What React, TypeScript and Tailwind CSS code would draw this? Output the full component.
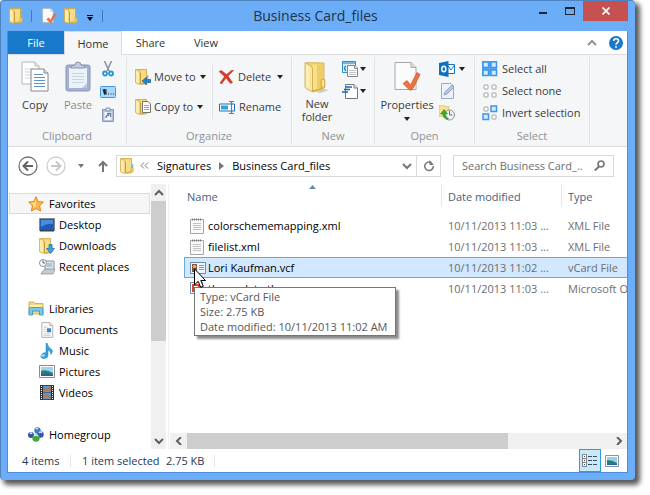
import type { ReactNode } from 'react';

function LargeFolder() {
  return (
    <svg viewBox="0 0 26 32" className="h-8 w-[26px]" aria-hidden="true">
      <path d="M20 28l5 1-9 3-4-1z" fill="#c9c9c9" />
      <path d="M3 1.500l17 .5v25l-11 3z" fill="#f3d46f" stroke="#d3ab45" strokeWidth=".8" />
      <path d="M8 4l11-1v23l-11 3z" fill="#f8e08a" />
      <path d="M13 4l6-1v23l-6 1.500z" fill="#efcd64" />
      <path d="M1 1.500l6 3.500q1.500 1 1.500 3V31L2 27.500q-1-.5-1-2z" fill="#f9e59c" stroke="#cfa63d" strokeWidth=".8" />
      <path d="M2.500 4l2 1.500V27l-2-1.500z" fill="#fdf3c6" />
      <path d="M9 30l8-2.500V20q0-2 2-2t2 2v6l-2 2-10 3z" fill="#e9bd4b" stroke="#cb9f36" strokeWidth=".6" />
      <path d="M18 19.500q1-1.500 2 0v5.500l-2 .5z" fill="#fbea9e" />
    </svg>
  );
}

function Folder() {
  return (
    <svg viewBox="0 0 14 16" className="h-4 w-3.5" aria-hidden="true">
      <path d="M1.500.5h10v13l-5 1.500z" fill="#efcf69" stroke="#d0a63c" strokeWidth=".8" />
      <path d="M6 1.500h5v11.500l-5 1z" fill="#f5dc86" />
      <path d="M.5.5l3 1.500q1.500.8 1.500 2v11.500L1 14q-.5-.2-.5-1z" fill="#fbebad" stroke="#d3aa40" strokeWidth=".8" />
      <path d="M5.500 15.300V4" stroke="#c99d31" />
      <path d="M11 9.500h1.500q.8 0 .8 1v3l-2 1.500-5 .5 4.700-2z" fill="#f2ca5a" stroke="#cc9f35" strokeWidth=".5" />
      <path d="M12.700 6v4" stroke="#6fb9df" strokeWidth="1.200" />
    </svg>
  );
}

function Page({ className = 'w-4 h-4', children }: { className?: string; children?: ReactNode }) {
  return (
    <svg viewBox="0 0 24 28" className={className} aria-hidden="true">
      <path d="M3 1h14l5 5v21H3z" fill="#fcfcfc" stroke="#9b9b9b" strokeWidth="1.300" />
      <path d="M17 1v5h5" fill="#e5e5e5" stroke="#9b9b9b" strokeWidth="1.300" />
      {children}
    </svg>
  );
}

function CheckedPage({ className }: { className?: string }) {
  return (
    <svg viewBox="0 0 27 31" className={className} aria-hidden="true">
      <path d="M1 1h16l5 5v22H1z" fill="#fbfbfc" stroke="#a7a7ab" />
      <path d="M17 1v5h5" fill="#ddd" stroke="#a7a7ab" />
      <path d="M9 22l4-3 3.500 4.500L23 11l3 2-7 14q-2 3-4 1z" fill="#ee7344" stroke="#ce5125" strokeWidth=".7" />
    </svg>
  );
}

function Down({ className = 'text-[#222]' }: { className?: string }) {
  return (
    <svg viewBox="0 0 6 4" className={`h-1 w-1.5 shrink-0 ${className}`} aria-hidden="true">
      <path d="M0 0h6L3 4z" fill="currentColor" />
    </svg>
  );
}

function CopyIcon() {
  return (
    <svg viewBox="0 0 28 32" className="h-8 w-7" aria-hidden="true">
      <path d="M1 1h13l4 4v18H1z" fill="#fff" stroke="#b6b6b6" />
      <path d="M14 1v4h4" fill="#eee" stroke="#b6b6b6" />
      <path d="M4 8h8M4 11h7M4 14h7M4 17h7" stroke="#c6d5e6" />
      <path d="M10 8h13l4 4v18H10z" fill="#fff" stroke="#868686" />
      <path d="M23 8v4h4" fill="#e4e4e4" stroke="#868686" />
      <path d="M13 13.500h9M13 16.500h11M13 19.500h11M13 22.500h11M13 25.500h11" stroke="#5994cd" />
    </svg>
  );
}

function PasteIcon() {
  return (
    <svg viewBox="0 0 26 32" className="h-8 w-[26px]" aria-hidden="true">
      <rect x="1" y="4" width="24" height="26" rx="2" fill="#a3b2cf" stroke="#8799ba" />
      <path d="M4 7h18v20H4z" fill="#edf2fa" />
      <path d="M7 12.500h12M7 15.500h12M7 18.500h12M7 21.500h12" stroke="#c8d3e4" />
      <path d="M6 7V5l4-1q0-3 3-3t3 3l4 1v2z" fill="#c3cde0" stroke="#8393b0" />
      <path d="M17 27l5-5v5z" fill="#b9c5db" />
    </svg>
  );
}

function CutIcon() {
  return (
    <svg viewBox="0 0 12 16" className="h-4 w-3" aria-hidden="true">
      <path d="M2.500 0l4.500 10M9.500 0L5 10" stroke="#8c959d" strokeWidth="1.600" />
      <circle cx="3" cy="12.500" r="2" fill="none" stroke="#2596d6" strokeWidth="1.800" />
      <circle cx="9" cy="12.500" r="2" fill="none" stroke="#2596d6" strokeWidth="1.800" />
    </svg>
  );
}

function CopyPathIcon() {
  return (
    <svg viewBox="0 0 16 12" className="h-3 w-4" aria-hidden="true">
      <rect x=".5" y=".5" width="15" height="11" rx="1" fill="#a9d9ff" stroke="#3f96df" />
      <path d="M3 3l1.500 5.500V3L6 8.500V3M8 8h1M10.500 8h1M13 8h1" fill="none" stroke="#17202b" />
    </svg>
  );
}

function PasteShortcutIcon() {
  return (
    <svg viewBox="0 0 12 15" className="h-[15px] w-3" aria-hidden="true">
      <path d="M.5 2.500h11v12H.5z" fill="#b4c1d9" stroke="#8798b8" />
      <path d="M2.500 5h7v8h-7z" fill="#f4f7fc" />
      <path d="M4 1h4v3H4z" fill="#dbe1ed" stroke="#8798b8" />
      <path d="M4 11q0-3 3-3M5 6.500h3.500V10" fill="none" stroke="#6078a4" strokeWidth="1.300" />
    </svg>
  );
}

function MoveIcon() {
  return (
    <span className="relative block h-4 w-[15px]">
      <Folder />
      <svg viewBox="0 0 9 8" className="absolute -right-px bottom-0 h-2 w-[9px]" aria-hidden="true">
        <path d="M0 4l4.500-4v2.500H9v3H4.500V8z" fill="#2385c8" stroke="#17619a" strokeWidth=".6" />
      </svg>
    </span>
  );
}

function CopyToIcon() {
  return (
    <span className="relative block h-4 w-[15px]">
      <Folder />
      <svg viewBox="0 0 9 12" className="absolute -right-px bottom-0.5 h-3 w-[9px]" aria-hidden="true">
        <path d="M.5.5H6L8.500 3v8.500h-8z" fill="#fff" stroke="#737373" />
        <path d="M2 4.500h5M2 6.500h5M2 8.500h5" stroke="#5a96cf" strokeWidth=".8" />
      </svg>
    </span>
  );
}

function DeleteIcon() {
  return (
    <svg viewBox="0 0 15 14" className="h-3.5 w-[15px]" aria-hidden="true">
      <path d="M0 1.500L2.500.5l5 4L13 0l1.500.5L9 6l4.500 6.500-2 1L7 8l-4.500 6L1 13l4.500-6.500z" fill="#dc3b25" stroke="#bd2b1b" strokeWidth=".5" />
    </svg>
  );
}

function RenameIcon() {
  return (
    <svg viewBox="0 0 16 13" className="h-[13px] w-4" aria-hidden="true">
      <path d="M.5 3h15v7H.5z" fill="#fff" stroke="#1673b8" />
      <path d="M2 4.500h7v4H2z" fill="#31a1dd" />
      <path d="M10 .5h5M12.500 .5v12M10 12.500h5" fill="none" stroke="#737b82" strokeWidth="1.200" />
    </svg>
  );
}

function NewItemIcon() {
  return (
    <svg viewBox="0 0 16 16" className="h-4 w-4" aria-hidden="true">
      <path d="M.5.5h13v11H.5z" fill="#d9eefa" stroke="#338dc7" />
      <path d="M1 1h12v2H1z" fill="#70b7e2" />
      <path d="M4 5q-3 2 0 5" fill="none" stroke="#2b87c5" strokeWidth="1.500" />
      <path d="M5.500 4.500H13L15.500 7v8.500h-10z" fill="#fff" stroke="#858585" />
      <path d="M12.500 4.500v3h3" fill="#eee" stroke="#858585" />
      <path d="M7 9.500h7M7 11.500h7M7 13.500h7" stroke="#b2b2b2" strokeWidth=".8" />
    </svg>
  );
}

function EasyAccessIcon() {
  return (
    <svg viewBox="0 0 16 16" className="h-4 w-4" aria-hidden="true">
      <path d="M3.500 1.500H12L15.500 5v10.500h-12z" fill="#fff" stroke="#777" />
      <path d="M12 1.500V5h3.500" fill="#eee" stroke="#777" />
      <path d="M4 4h6M2 6.500h6M0 9h6" stroke="#1b67b5" strokeWidth="1.300" />
    </svg>
  );
}

function OutlookIcon() {
  return (
    <svg viewBox="0 0 16 16" className="h-4 w-4" aria-hidden="true">
      <path d="M8 3.500h7.500v9H8z" fill="#fff" stroke="#1276c2" />
      <path d="M9 5l3 4 3.500-5" fill="none" stroke="#1276c2" />
      <path d="M0 2l9.500-2v16L0 14z" fill="#0f72bf" />
      <ellipse cx="4.800" cy="8" rx="2" ry="2.800" fill="none" stroke="#fff" strokeWidth="1.500" />
    </svg>
  );
}

function EditIcon() {
  return (
    <svg viewBox="0 0 16 16" className="h-4 w-4" aria-hidden="true">
      <path d="M2.500.5H12L14.500 3v12.500h-12z" fill="#edf2fa" stroke="#9aaac6" />
      <path d="M5 12l1-3 7-7 2 2-7 7z" fill="#b9c6dd" stroke="#8497bb" strokeWidth=".8" />
    </svg>
  );
}

function HistoryIcon() {
  return (
    <svg viewBox="0 0 16 16" className="h-4 w-4" aria-hidden="true">
      <path d="M0 0h5l1 1.500h4v10H0z" fill="#fae08c" stroke="#d8b752" strokeWidth=".6" />
      <circle cx="10.500" cy="10" r="5" fill="#f2f5f6" stroke="#8a9295" />
      <path d="M10.500 6v4h3" fill="none" stroke="#667177" />
      <path d="M8.500 14.500Q3.500 13 4 9H1.500L5 4.500 8.500 9H6.500q0 3 3 4.500z" fill="#34ad2c" stroke="#1c831d" strokeWidth=".5" />
    </svg>
  );
}

// squares are listed left to right, top to bottom
function SquaresIcon({ on }: { on: boolean[] }) {
  return (
    <svg viewBox="0 0 16 16" className="h-4 w-4 shrink-0" aria-hidden="true">
      {on.every(Boolean) && <path d="M0 0h15v15H0z" fill="#56a8f5" />}
      {on.map((active, i) => {
        const x = (i % 2) * 8;
        const y = Math.floor(i / 2) * 8;
        return active ? (
          <rect key={i} x={x + 1} y={y + 1} width="5.500" height="5.500" fill="#d4ebff" stroke="#3c95ec" strokeWidth="1.500" />
        ) : (
          <rect key={i} x={x + 2} y={y + 2} width="4" height="4" rx=".5" fill="#fff" stroke="#a0a0a0" />
        );
      })}
    </svg>
  );
}

function StarIcon() {
  return (
    <svg viewBox="0 0 16 16" className="h-4 w-4" aria-hidden="true">
      <path d="M8 .7l2.200 4.800 5.200.6-3.800 3.600 1 5.300L8 12.500 3.400 15l1-5.300L.6 6.100l5.200-.6z" fill="#fdb843" stroke="#e5832a" />
      <path d="M8 3v7L5 12l.6-3L3 7l3.500-.5z" fill="#ffe290" />
    </svg>
  );
}

function DesktopIcon() {
  return (
    <svg viewBox="0 0 16 14" className="h-3.5 w-4" aria-hidden="true">
      <path d="M.5.5h15v12H.5z" fill="#2059b6" stroke="#838d98" />
      <path d="M2 2h12v4Q8 5 2 9z" fill="#4b8be1" />
      <path d="M1 12h14v1.500H1z" fill="#35414e" />
    </svg>
  );
}

function DownloadsIcon() {
  return (
    <span className="relative block h-4 w-[15px]">
      <Folder />
      <svg viewBox="0 0 9 10" className="absolute -right-px bottom-0 h-2.5 w-[9px]" aria-hidden="true">
        <path d="M3 .5h3v4h2.500l-4 5-4-5H3z" fill="#3aa5ea" stroke="#156cae" strokeWidth=".7" />
      </svg>
    </span>
  );
}

function RecentIcon() {
  return (
    <svg viewBox="0 0 16 16" className="h-4 w-4" aria-hidden="true">
      <path d="M6 2h9v9H6z" fill="#dde4e9" stroke="#8c9499" />
      <path d="M8 4h5v4H8z" fill="#adc7d8" />
      <path d="M4 12l2-2h10l-2 5H2z" fill="#c5ccd0" stroke="#858c90" strokeWidth=".7" />
      <circle cx="4" cy="4" r="3.500" fill="#fff" stroke="#899198" />
      <path d="M4 1.500V4h2" fill="none" stroke="#55616a" />
    </svg>
  );
}

function LibrariesIcon() {
  return (
    <svg viewBox="0 0 16 15" className="h-[15px] w-4" aria-hidden="true">
      <path d="M1 1h5l1 1.500h8V13H1z" fill="#f4d978" stroke="#c9a546" strokeWidth=".8" />
      <path d="M2 4h12v3H2z" fill="#fff1b8" />
      <path d="M1 14V8q0-1.500 1.500-1.500h11Q15 6.500 15 8v6h-3.500v-4h-7v4z" fill="#7cc8ea" stroke="#398db8" strokeWidth=".8" />
    </svg>
  );
}

function DocumentsIcon() {
  return (
    <Page>
      <path d="M6 9h7M6 13h5M6 17h5M6 21h12M6 24h12" stroke="#a8a8a8" />
      <path d="M12 11h7v7h-7z" fill="#4283c6" />
    </Page>
  );
}

function MusicIcon() {
  return (
    <svg viewBox="0 0 16 16" className="h-4 w-4" aria-hidden="true">
      <path d="M8 0q1 4 4 6 3 2 0 5.500 0-3.500-3-4.500v5.500q0 3-4 3-4 0-3-3 1-3 5-3V0z" fill="#35a0e2" stroke="#2382bd" strokeWidth=".5" />
      <ellipse cx="4" cy="12.500" rx="2" ry="1.200" fill="#9edcff" />
    </svg>
  );
}

function PicturesIcon() {
  return (
    <svg viewBox="0 0 16 13" className="h-[13px] w-4" aria-hidden="true">
      <path d="M.5.5h15v12H.5z" fill="#fff" stroke="#8c8c8c" />
      <path d="M2 2h12v9H2z" fill="#9dd5f0" />
      <path d="M2 6q5-2 12 2v3H2z" fill="#317f74" />
      <path d="M2 9q6-2 12 1v1H2z" fill="#2663a0" />
    </svg>
  );
}

function VideosIcon() {
  return (
    <svg viewBox="0 0 14 15" className="ml-px h-[15px] w-3.5" aria-hidden="true">
      <path d="M0 0h14v15H0z" fill="#283039" />
      <path d="M3 .8h8v6.400H3zM3 7.800h8v6.400H3z" fill="#539ed0" />
      <path d="M3 2l4 2 4-3v5L7 5 3 7zM3 10l4-1 4 3v2L7 12l-4 1z" fill="#c66e46" />
      <path d="M1.500 1v13M12.500 1v13" stroke="#fff" strokeDasharray="1 1" />
    </svg>
  );
}

function HomegroupIcon() {
  return (
    <svg viewBox="0 0 16 15" className="h-[15px] w-4" aria-hidden="true">
      <circle cx="9.500" cy="3.500" r="3.200" fill="#3e7cba" />
      <circle cx="3" cy="8" r="3" fill="#3150b0" />
      <circle cx="12.500" cy="7.500" r="3.200" fill="#3450c2" />
      <circle cx="8" cy="11" r="3.700" fill="#46a53d" />
      <path d="M8 2q1-1 2 0M2 7q1-2 2 0M11 6q1-2 3 0M6 9q2-2 4 0" fill="none" stroke="#d1eaff" strokeWidth="1.300" />
    </svg>
  );
}

function XmlIcon() {
  return (
    <svg viewBox="0 0 14 16" className="h-4 w-3.5" aria-hidden="true">
      <path d="M.5 1.500h13v14H.5z" fill="#fafafa" stroke="#a6a6a6" />
      <path d="M2 1.500h10" stroke="#777" strokeWidth="2" strokeDasharray="1 1" />
      <path d="M3 5.500h8M3 7.500h8M3 9.500h8M3 11.500h8" stroke="#c1c1c1" />
    </svg>
  );
}

function VcardIcon() {
  return (
    <svg viewBox="0 0 16 12" className="h-3 w-4" aria-hidden="true">
      <path d="M.5.5h15v11H.5z" fill="#eef5fc" stroke="#6c88aa" />
      <path d="M2 2h5v8H2z" fill="#7d5640" />
      <circle cx="4.500" cy="4.500" r="1.800" fill="#ebaa6c" />
      <path d="M9 3.500h5M9 5.500h5M9 7.500h5" stroke="#6b9dd5" />
    </svg>
  );
}

function ThemeIcon() {
  return (
    <svg viewBox="0 0 16 16" className="h-4 w-4" aria-hidden="true">
      <path d="M.5 1.500h12v11H.5z" fill="#fff" stroke="#7189a6" />
      <path d="M3 4h6v6H3z" fill="none" stroke="#d9472d" strokeWidth="2" />
      <path d="M6 6h9v9H6z" fill="#e65432" />
    </svg>
  );
}

function Chevron({ className = '', d = 'M1 6l4-4 4 4' }: { className?: string; d?: string }) {
  return (
    <svg viewBox="0 0 10 8" className={`h-2 w-2.5 ${className}`} aria-hidden="true">
      <path d={d} fill="none" stroke="currentColor" strokeWidth="2" />
    </svg>
  );
}

function RibbonGroup({ label, className, children }: { label: string; className: string; children: ReactNode }) {
  return (
    <section className={`flex shrink-0 flex-col border-r border-[#e1e3e5] ${className}`}>
      <div className="flex h-[71px] items-start">{children}</div>
      <h2 className="text-center leading-4 text-[#8e9195]">{label}</h2>
    </section>
  );
}

const favorites = [
  { name: 'Desktop', icon: <DesktopIcon /> },
  { name: 'Downloads', icon: <DownloadsIcon /> },
  { name: 'Recent places', icon: <RecentIcon /> },
];

const libraries = [
  { name: 'Documents', icon: <DocumentsIcon /> },
  { name: 'Music', icon: <MusicIcon /> },
  { name: 'Pictures', icon: <PicturesIcon /> },
  { name: 'Videos', icon: <VideosIcon /> },
];

const files = [
  { name: 'colorschememapping.xml', date: '10/11/2013 11:03 ...', type: 'XML File', icon: <XmlIcon /> },
  { name: 'filelist.xml', date: '10/11/2013 11:03 ...', type: 'XML File', icon: <XmlIcon /> },
  { name: 'Lori Kaufman.vcf', date: '10/11/2013 11:02 ...', type: 'vCard File', icon: <VcardIcon />, selected: true },
  { name: 'themedata.thmx', date: '10/11/2013 11:03 ...', type: 'Microsoft Office Theme', icon: <ThemeIcon /> },
];

function TitleBar() {
  return (
    <header className="grid h-[30px] grid-cols-[1fr_auto_1fr] items-start">
      <div className="flex h-[30px] items-center gap-2 pl-0.5">
        <Folder />
        <span className="h-3 w-px bg-[#4778b0]" />
        <button aria-label="Properties" className="ml-0.5"><CheckedPage className="h-4 w-3.5" /></button>
        <button aria-label="New folder"><Folder /></button>
        <button aria-label="Customize toolbar" className="flex w-2 flex-col items-center gap-px pt-1">
          <span className="h-px w-1.5 bg-black" />
          <Down className="text-black" />
        </button>
        <span className="h-3 w-px bg-[#4778b0]" />
      </div>
      <h1 className="pr-1 text-[14px] leading-[30px] text-[#223449]">Business Card_files</h1>
      <div className="flex justify-end">
        <button aria-label="Minimize" className="flex h-5 w-[27px] items-center justify-center">
          <span className="mt-1 h-0.5 w-2 bg-[#1c2530]" />
        </button>
        <button aria-label="Maximize" className="flex h-5 w-[27px] items-center justify-center">
          <span className="h-2 w-2.5 border border-t-2 border-[#1c2530]" />
        </button>
        <button aria-label="Close" className="flex h-5 w-[45px] items-center justify-center bg-[#c75050]">
          <svg viewBox="0 0 8 8" className="size-2" aria-hidden="true">
            <path d="M.5.5l7 7M7.500.5l-7 7" stroke="#fff" strokeWidth="1.700" />
          </svg>
        </button>
      </div>
    </header>
  );
}

function TabBar() {
  return (
    <nav aria-label="Ribbon tabs" className="flex h-6 items-stretch border-b border-[#dadbdc] text-[#333]">
      <button className="w-14 bg-[#1979ca] text-white">File</button>
      <button className="-mb-px w-[58px] border-x border-t border-[#dadbdc] bg-[#f5f6f7]">Home</button>
      <button className="w-[57px]">Share</button>
      <button className="w-[54px]">View</button>
      <div className="ml-auto flex items-center gap-3 pr-1">
        <button aria-label="Minimize ribbon"><Chevron className="text-[#929292]" /></button>
        <button aria-label="Help">
          <svg viewBox="0 0 14 14" className="size-3.5" aria-hidden="true">
            <circle cx="7" cy="7" r="7" fill="#1979ca" />
            <path d="M4.700 5q0-2.200 2.400-2.200T9.500 5q0 1-1.200 1.800Q7 7.500 7 8.800M7 10v1.700" fill="none" stroke="#fff" strokeWidth="1.600" />
          </svg>
        </button>
      </div>
    </nav>
  );
}

function Ribbon() {
  return (
    <div className="flex overflow-hidden border-b border-[#dadbdc] bg-[#f5f6f7] pt-0.5 pb-0.5 text-[#3b3b3b]">
      <RibbonGroup label="Clipboard" className="w-[119px]">
        <button className="flex w-[54px] flex-col items-center gap-1 pt-1">
          <CopyIcon />
          <span className="leading-4">Copy</span>
        </button>
        <button className="flex w-8 flex-col items-center gap-1 pt-1 text-[#8c8c8c]">
          <PasteIcon />
          <span className="leading-4">Paste</span>
        </button>
        <div className="ml-1.5 flex w-4 flex-col items-center gap-[9px] pt-1">
          <button aria-label="Cut"><CutIcon /></button>
          <button aria-label="Copy path"><CopyPathIcon /></button>
          <button aria-label="Paste shortcut"><PasteShortcutIcon /></button>
        </div>
      </RibbonGroup>

      <RibbonGroup label="Organize" className="w-[165px]">
        <div className="mt-2 flex h-[54px] w-[86px] flex-col justify-between border-r border-[#e1e3e5] py-1 pl-2">
          <button className="flex h-4 items-center gap-1"><MoveIcon /><span>Move to</span><Down /></button>
          <button className="flex h-4 items-center gap-1"><CopyToIcon /><span>Copy to</span><Down /></button>
        </div>
        <div className="mt-2 flex h-[54px] flex-col justify-between py-1 pl-1.5">
          <button className="flex h-4 items-center gap-1"><DeleteIcon /><span>Delete</span><Down className="ml-0.5 text-[#222]" /></button>
          <button className="flex h-4 items-center gap-1"><RenameIcon /><span>Rename</span></button>
        </div>
      </RibbonGroup>

      <RibbonGroup label="New" className="w-[83px]">
        <button className="flex w-[50px] flex-col items-center gap-1 pt-1">
          <LargeFolder />
          <span className="leading-[13px]">New<br />folder</span>
        </button>
        <div className="flex flex-col gap-1.5 pt-1">
          <button aria-label="New item" className="flex items-center gap-0.5"><NewItemIcon /><Down /></button>
          <button aria-label="Easy access" className="flex items-center gap-0.5"><EasyAccessIcon /><Down /></button>
        </div>
      </RibbonGroup>

      <RibbonGroup label="Open" className="w-[100px]">
        <button className="flex w-16 flex-col items-center gap-1 pt-1">
          <CheckedPage className="h-8 w-[27px]" />
          <span className="leading-4">Properties</span>
          <Down />
        </button>
        <div className="flex flex-col gap-1.5 pt-1">
          <button aria-label="Open with Outlook" className="flex items-center gap-1"><OutlookIcon /><Down /></button>
          <button aria-label="Edit"><EditIcon /></button>
          <button aria-label="History"><HistoryIcon /></button>
        </div>
      </RibbonGroup>

      <RibbonGroup label="Select" className="w-[115px]">
        <div className="flex flex-col gap-1.5 pt-1 pl-[7px]">
          <button className="flex h-4 items-center gap-1"><SquaresIcon on={[true, true, true, true]} />Select all</button>
          <button className="flex h-4 items-center gap-1"><SquaresIcon on={[false, false, false, false]} />Select none</button>
          <button className="flex h-4 items-center gap-1"><SquaresIcon on={[false, true, true, false]} />Invert selection</button>
        </div>
      </RibbonGroup>
    </div>
  );
}

function AddressRow() {
  return (
    <div className="flex h-[37px] items-center pr-[13px] pl-2.5">
      <button aria-label="Back">
        <svg viewBox="0 0 20 20" className="size-5" aria-hidden="true">
          <circle cx="10" cy="10" r="9" fill="none" stroke="#737373" strokeWidth="1.300" />
          <path d="M15 10H6M10 5.500L5.500 10l4.500 4.500" fill="none" stroke="#626262" strokeWidth="2" />
        </svg>
      </button>
      <button aria-label="Forward" className="ml-2">
        <svg viewBox="0 0 20 20" className="size-5" aria-hidden="true">
          <circle cx="10" cy="10" r="9" fill="none" stroke="#cecece" strokeWidth="1.300" />
          <path d="M5 10h9M10 5.500l4.500 4.500-4.500 4.500" fill="none" stroke="#c8c8c8" strokeWidth="2" />
        </svg>
      </button>
      <button aria-label="Recent locations" className="ml-3"><Down className="text-[#777]" /></button>
      <button aria-label="Up" className="ml-3.5">
        <svg viewBox="0 0 10 12" className="h-3 w-2.5" aria-hidden="true">
          <path d="M5 12V2M1 6l4-4 4 4" fill="none" stroke="#777" strokeWidth="2" />
        </svg>
      </button>
      <div className="ml-2 flex h-[22px] flex-1 items-center border border-[#d9d9d9] pl-[3px] text-black">
        <Folder />
        <svg viewBox="0 0 9 7" className="ml-1.5 h-[7px] w-[9px]" aria-hidden="true">
          <path d="M4 .5l-3 3 3 3M8 .5l-3 3 3 3" fill="none" stroke="#777" />
        </svg>
        <button className="ml-2">Signatures</button>
        <svg viewBox="0 0 5 8" className="mx-2 h-2 w-[5px]" aria-hidden="true">
          <path d="M0 0l5 4-5 4z" fill="#777" />
        </svg>
        <button>Business Card_files</button>
        <button aria-label="Previous locations" className="mr-1 ml-auto"><Chevron className="text-[#777]" d="M1 2l4 4 4-4" /></button>
        <button aria-label="Refresh" className="flex h-full w-6 items-center justify-center border-l border-[#d9d9d9]">
          <svg viewBox="0 0 12 12" className="size-3" aria-hidden="true">
            <path d="M8 2.500A4.300 4.300 0 1 0 10.300 6" fill="none" stroke="#777" strokeWidth="1.500" />
            <path d="M6.500 0v5H11z" fill="#777" />
          </svg>
        </button>
      </div>
      <label className="ml-3 flex h-[22px] w-[161px] items-center border border-[#d9d9d9] pr-2 pl-2">
        <input
          type="search"
          aria-label="Search"
          placeholder="Search Business Card_..."
          className="min-w-0 flex-1 bg-transparent outline-none placeholder:text-[#6d6d6d]"
        />
        <svg viewBox="0 0 11 11" className="size-[11px] shrink-0" aria-hidden="true">
          <circle cx="7" cy="4" r="3" fill="none" stroke="#777" strokeWidth="1.700" />
          <path d="M5 6.500L.8 10.500" stroke="#777" strokeWidth="2" />
        </svg>
      </label>
    </div>
  );
}

function NavItem({ icon, name }: { icon: ReactNode; name: string }) {
  return (
    <li>
      <a href="#" className="flex h-[21px] items-center pl-[30px]">
        <span className="flex w-5 shrink-0 items-center">{icon}</span>
        {name}
      </a>
    </li>
  );
}

function NavHeading({ icon, name, active }: { icon: ReactNode; name: string; active?: boolean }) {
  return (
    <a href="#" className={`flex h-[21px] items-center border pl-[18px] ${active ? 'border-[#dadada] bg-[#f6f6f6]' : 'border-transparent'}`}>
      <span className="flex w-[21px] shrink-0 items-center">{icon}</span>
      {name}
    </a>
  );
}

function NavigationPane() {
  return (
    <aside className="flex w-[161px] shrink-0 border-r border-[#f0f0f0] pr-0.5 text-black">
      <nav aria-label="Folders" className="flex flex-1 flex-col gap-[21px] pt-[9px] pr-px pl-px">
        <div>
          <NavHeading icon={<StarIcon />} name="Favorites" active />
          <ul>{favorites.map(item => <NavItem key={item.name} {...item} />)}</ul>
        </div>
        <div>
          <NavHeading icon={<LibrariesIcon />} name="Libraries" />
          <ul>{libraries.map(item => <NavItem key={item.name} {...item} />)}</ul>
        </div>
        <NavHeading icon={<HomegroupIcon />} name="Homegroup" />
      </nav>
      <div className="flex w-[15px] flex-col bg-[#f0f0f0] text-[#606060]">
        <button aria-label="Scroll up" className="flex h-[17px] items-center justify-center"><Chevron /></button>
        <div className="flex-[141] bg-[#cdcdcd]" />
        <div className="flex-[91]" />
        <button aria-label="Scroll down" className="flex h-[17px] items-center justify-center"><Chevron d="M1 2l4 4 4-4" /></button>
      </div>
    </aside>
  );
}

function FileTooltip() {
  return (
    <>
      <div role="tooltip" className="absolute top-[29px] left-[9px] z-10 border border-[#767676] bg-white py-px pr-2 pl-[5px] leading-[15px] whitespace-nowrap text-[#575757] shadow-[3px_3px_2px_rgba(0,0,0,0.45)]">
        <p>Type: vCard File</p>
        <p>Size: 2.75 KB</p>
        <p>Date modified: 10/11/2013 11:02 AM</p>
      </div>
      <svg viewBox="0 0 12 20" className="absolute top-[10px] left-[9px] z-20 h-5 w-3" aria-hidden="true">
        <path d="M.5.8v16l3.700-3.500 2.500 6 2.600-1-2.500-5.800h4.700z" fill="#fff" stroke="#000" />
      </svg>
    </>
  );
}

function FilePane() {
  return (
    <main className="flex min-w-0 flex-1 flex-col pl-px">
      <div className="flex-1 overflow-hidden pl-3.5">
        <table className="w-full table-fixed border-separate border-spacing-0 text-left">
          <thead>
            <tr className="text-[#4c607a]">
              <th className="p-0 pb-2 align-top font-normal">
                <div className="relative h-[23px] border-r border-[#e3e8ee] pl-[3px] leading-[26px]">
                  Name
                  <svg viewBox="0 0 7 4" className="absolute inset-x-0 top-px mx-auto h-1 w-[7px]" aria-hidden="true">
                    <path d="M0 4l3.500-4L7 4z" fill="#5b91b2" />
                  </svg>
                </div>
              </th>
              <th className="w-[120px] p-0 pb-2 align-top font-normal">
                <div className="h-[23px] border-r border-[#e3e8ee] pl-1.5 leading-[26px]">Date modified</div>
              </th>
              <th className="w-[65px] p-0 pb-2 align-top font-normal">
                <div className="h-[23px] pl-1.5 leading-[26px]">Type</div>
              </th>
            </tr>
          </thead>
          <tbody>
            {files.map(file => {
              const edge = file.selected ? 'border-[#66a7e8] bg-[#d1e8ff]' : 'border-transparent';
              return (
                <tr key={file.name} className="h-[21px] whitespace-nowrap text-[#6d6d6d]">
                  <td className={`relative border-y border-l p-0 text-black ${edge}`}>
                    <div className="flex h-[19px] items-center pl-[5px]">
                      <span className="flex w-[18px] shrink-0">{file.icon}</span>
                      {file.name}
                    </div>
                    {file.selected && <FileTooltip />}
                  </td>
                  <td className={`overflow-hidden border-y p-0 pl-1.5 ${edge}`}>{file.date}</td>
                  <td className={`overflow-hidden border-y p-0 pl-1.5 ${edge}`}>{file.type}</td>
                </tr>
              );
            })}
          </tbody>
        </table>
      </div>
      <div className="flex h-4 bg-[#f0f0f0] text-[#606060]">
        <button aria-label="Scroll left" className="flex w-[17px] items-center justify-center"><Chevron d="M7 0L3 4l4 4" /></button>
        <div className="flex-[321] bg-[#cdcdcd]" />
        <div className="flex-[102]" />
        <button aria-label="Scroll right" className="flex w-[17px] items-center justify-center"><Chevron d="M3 0l4 4-4 4" /></button>
      </div>
    </main>
  );
}

function StatusBar() {
  return (
    <footer className="flex h-[23px] items-center pl-3.5 text-[#1e395b]">
      <span className="w-12">4 items</span>
      <span className="mr-[11px] h-3 w-px bg-[#e3e6ea]" />
      <span className="w-[84px] whitespace-nowrap">1 item selected</span>
      <span className="w-12 whitespace-nowrap">2.75 KB</span>
      <span className="h-3 w-px bg-[#e3e6ea]" />
      <div className="ml-auto flex h-full items-center pr-2">
        <button aria-label="Details view" className="flex h-[23px] w-[22px] items-center justify-center border border-[#26a0da] bg-[#cbe8f6]">
          <svg viewBox="0 0 16 14" className="h-3.5 w-4" aria-hidden="true">
            <path d="M.5.5h4v4h-4zM.5 4.500h4v4h-4zM.5 8.500h4v4h-4z" fill="#fff" stroke="#778492" />
            <path d="M2 2.500h1M2 10.500h1M6 2.500h4M11 2.500h4M6 6.500h4M11 6.500h4M6 10.500h4M11 10.500h4" stroke="#3b4d60" />
            <path d="M2 6.500h1" stroke="#d52b1e" strokeWidth="1.500" />
          </svg>
        </button>
        <button aria-label="Large icons view" className="ml-1">
          <svg viewBox="0 0 14 12" className="h-3 w-3.5" aria-hidden="true">
            <path d="M.5.5h13v11H.5z" fill="#fff" stroke="#8596ab" />
            <path d="M2 2h10v8H2z" fill="#95d1ef" />
            <path d="M2 5q5 0 10 3v2H2z" fill="#277e72" />
            <path d="M2 9h10v1H2z" fill="#2863a7" />
          </svg>
        </button>
      </div>
    </footer>
  );
}

export default function App() {
  return (
    <div className="flex min-h-screen bg-white pr-[15px] pb-[15px] font-['Open_Sans',sans-serif] text-[11px] leading-4">
      <div className="flex min-w-0 flex-1 flex-col rounded border-t border-l border-[#4f83c1] bg-[#6badf6] pr-[7px] pb-[7px] pl-1.5 shadow-[4px_4px_5px_1px_rgba(0,0,0,0.65)]">
        <TitleBar />
        <div className="flex flex-1 flex-col border-r border-b border-l border-[#4d8fdc] bg-white">
          <TabBar />
          <Ribbon />
          <AddressRow />
          <div className="flex flex-1">
            <NavigationPane />
            <FilePane />
          </div>
          <StatusBar />
        </div>
      </div>
    </div>
  );
}
